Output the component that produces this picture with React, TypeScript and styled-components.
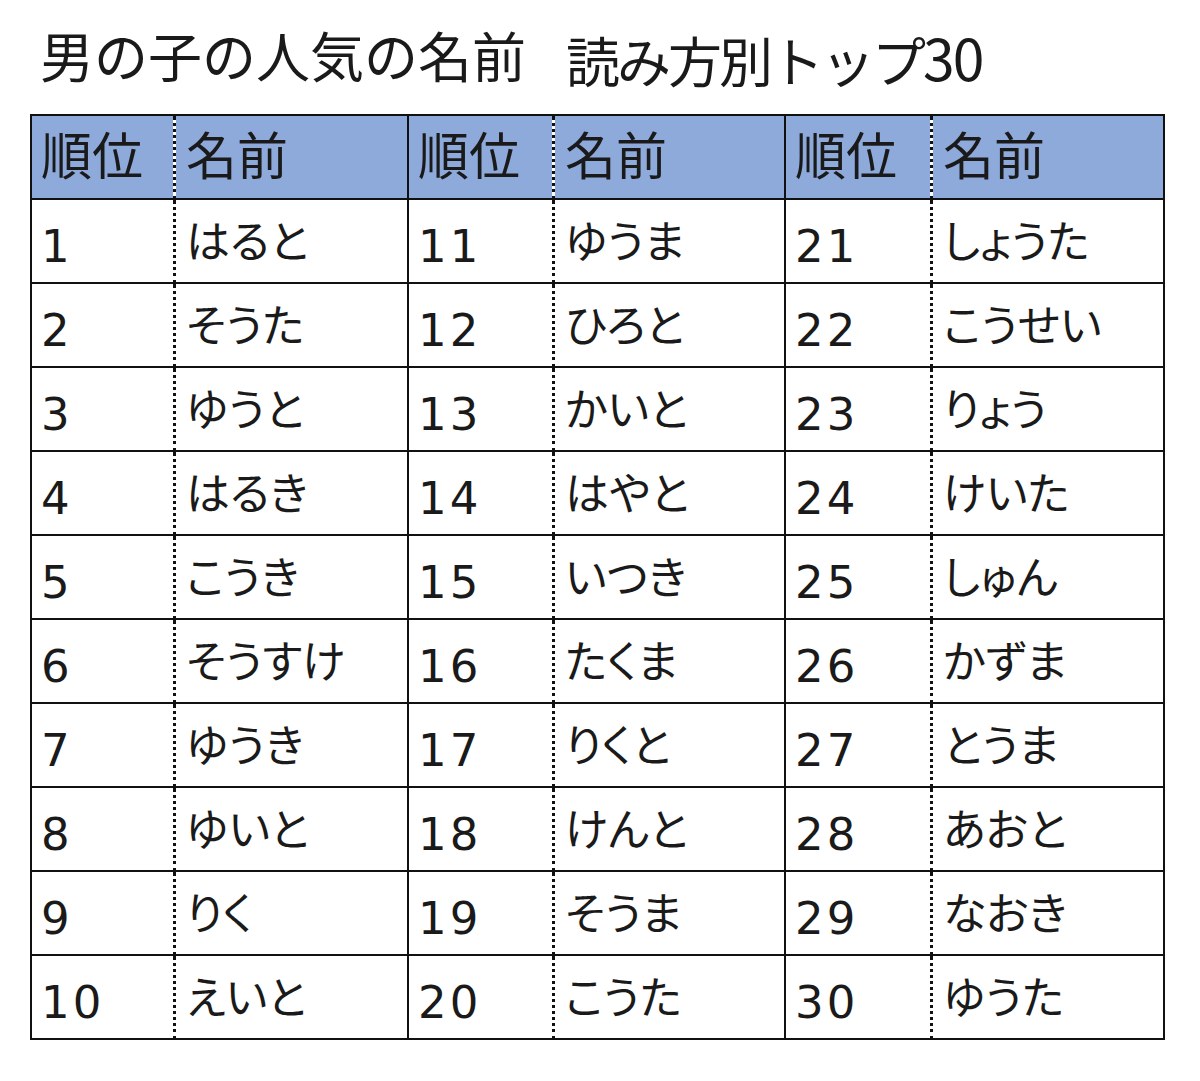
import styled, { createGlobalStyle } from "styled-components";

const GlobalStyle = createGlobalStyle`
  * {
    box-sizing: border-box;
  }

  body {
    margin: 0;
    background: #ffffff;
    color: #111111;
    font-family: "DejaVu Sans", "Noto Sans CJK JP", sans-serif;
  }
`;

const names: string[] = [
  "はると",
  "そうた",
  "ゆうと",
  "はるき",
  "こうき",
  "そうすけ",
  "ゆうき",
  "ゆいと",
  "りく",
  "えいと",
  "ゆうま",
  "ひろと",
  "かいと",
  "はやと",
  "いつき",
  "たくま",
  "りくと",
  "けんと",
  "そうま",
  "こうた",
  "しょうた",
  "こうせい",
  "りょう",
  "けいた",
  "しゅん",
  "かずま",
  "とうま",
  "あおと",
  "なおき",
  "ゆうた",
];

const GROUPS = 3;
const PER_GROUP = 10;

function App() {
  const rows = Array.from({ length: PER_GROUP }, (_, r) =>
    Array.from({ length: GROUPS }, (_, g) => {
      const rank = g * PER_GROUP + r + 1;
      return { rank, name: names[rank - 1] };
    })
  );

  return (
    <>
      <GlobalStyle />
      <Page>
        <Title>
          <span>男の子の人気の名前</span>
          <Subtitle>
            読み方別トップ<Digits>30</Digits>
          </Subtitle>
        </Title>

        <RankTable>
          {Array.from({ length: GROUPS }).map((_, g) => (
            <Row key={`head-${g}`}>
              <Cell $kind="rank" $head>
                順位
              </Cell>
              <Cell $kind="name" $head>
                名前
              </Cell>
            </Row>
          ))}

          {rows.map((row) =>
            row.map((item) => (
              <Row key={item.rank}>
                <Cell $kind="rank">
                  <Number>{item.rank}</Number>
                </Cell>
                <Cell $kind="name">
                  <Kana>{item.name}</Kana>
                </Cell>
              </Row>
            ))
          )}
        </RankTable>
      </Page>
    </>
  );
}

const Page = styled.div`
  width: 1200px;
  height: 1081px;
  padding: 28px 0 0 30px;
`;

const Title = styled.h1`
  display: flex;
  gap: 40px;
  margin: 0 0 33px 10px;
  height: 53px;
  font-family: "Noto Sans CJK JP", sans-serif;
  font-size: 54px;
  font-weight: 400;
  line-height: 1;
  color: #1a1a1a;
`;

const Subtitle = styled.span`
  letter-spacing: -3px;
`;

const Digits = styled.span`
  font-size: 57px;
  letter-spacing: -2px;
  vertical-align: 2px;
`;

const RankTable = styled.div`
  display: grid;
  grid-template-columns: 144px 233px 146px 231px 147px 232px;
  grid-auto-rows: 84px;
  width: 1135px;
  border-top: 2px solid #111111;
  border-left: 2px solid #111111;
`;

const Row = styled.div`
  display: contents;
`;

const Cell = styled.div<{ $kind: "rank" | "name"; $head?: boolean }>`
  display: flex;
  align-items: center;
  padding: ${(p) =>
    p.$head
      ? "0 0 8px"
      : p.$kind === "rank"
      ? "10px 0 0"
      : "0 0 4px"};
  padding-left: ${(p) => (p.$kind === "rank" ? "9px" : "10px")};
  font-family: "Noto Sans CJK JP", sans-serif;
  font-size: 51px;
  line-height: 1;
  color: #1a1a1a;
  background: ${(p) => (p.$head ? "#8eaadb" : "#ffffff")};
  background-clip: padding-box;
  border-bottom: 2px solid #111111;
  border-right: ${(p) =>
    p.$kind === "rank" ? "3px dotted #111111" : "2px solid #111111"};
  white-space: nowrap;
`;

const Number = styled.span`
  font-family: "DejaVu Sans", sans-serif;
  font-size: 45px;
  letter-spacing: 3px;
`;

const Kana = styled.span`
  font-size: 44px;
  font-feature-settings: "palt";
`;

export default App;
